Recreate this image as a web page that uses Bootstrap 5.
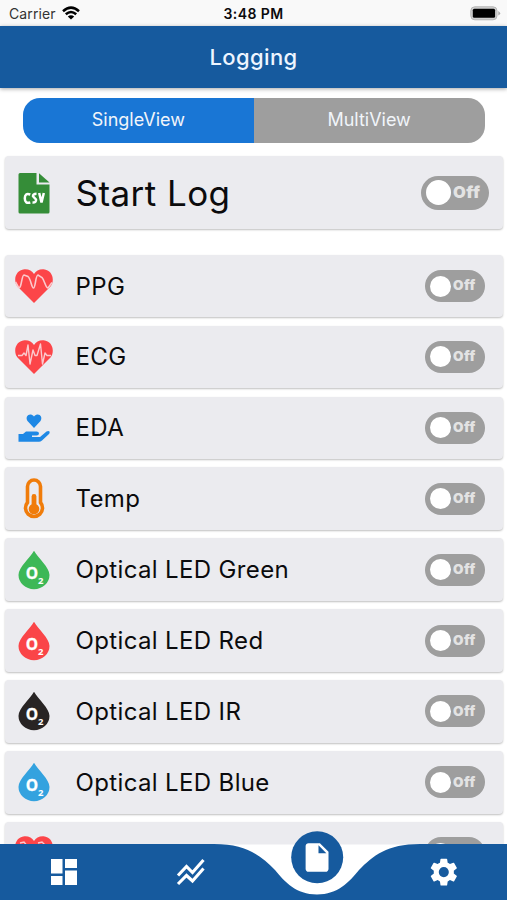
<!DOCTYPE html>
<html lang="en">
<head>
<meta charset="utf-8">
<meta name="viewport" content="width=device-width, initial-scale=1">
<title>Logging</title>
<link href="https://cdn.jsdelivr.net/npm/bootstrap@5.3.0/dist/css/bootstrap.min.css" rel="stylesheet">
<style>
body{font-family:Inter,"Liberation Sans",sans-serif;color:#0b0b0d;background:#fff;line-height:1}
.screen{height:900px}
.status-bar{height:25.5px;background:#f9f9f9;font-size:14px;padding:2px 9px 0 9px;display:grid;grid-template-columns:1fr auto 1fr}
.carrier{color:#333;letter-spacing:.1px}
.wifi{margin:-2px 0 0 6px}
.battery{margin:-1px -3px 0 0}
.clock{font-weight:600;font-size:14px;letter-spacing:.4px}
.title-bar{height:62.5px;background:#165a9e;color:#eef5ff;font-size:22px;font-weight:500;letter-spacing:.4px;box-shadow:0 1px 4px rgba(0,0,0,.35)}
.tabs{margin:9.5px 22.5px 0 23px;height:45px;border-radius:17px;font-size:18px;color:#f1f5fa}
.tab-on{background:#1976d5}
.tab-off{background:#9e9e9e}
.log-card{margin:0 4px 8.3px 5px;height:62.6px;background:#ebebef;border-radius:4px;box-shadow:0 1px 2px rgba(0,0,0,.25);font-size:24px;letter-spacing:.36px;padding-right:18px}
.log-card.big{height:73px;margin-top:13.5px;margin-bottom:25.8px;font-size:35px;letter-spacing:.45px;padding-right:14px}
.pic{width:70.5px;padding-left:8.5px}
.pic svg{display:block}
.big .pic{padding-top:1px}
.label{padding-top:1px}
.last-label{padding-top:2px}
.toggle{width:60px;height:32px;border-radius:16px;background:#9e9e9e;color:#e3e3e3;font-size:13.5px;font-weight:900;letter-spacing:.5px;padding-left:4.5px}
.knob{width:21px;height:21px;border-radius:50%;background:#fff;margin-right:2.5px}
.big .toggle{width:68px;height:34px;border-radius:17px;font-size:16.5px;padding-left:4.5px}
.big .knob{width:25px;height:25px;margin-right:2.5px}
.dock{height:56px;left:0;right:0;bottom:0}
.dock svg{display:block;overflow:visible}
</style>
<script src="https://cdn.jsdelivr.net/npm/bootstrap@5.3.0/dist/js/bootstrap.bundle.min.js"></script>
</head>
<body>
<svg width="0" height="0" class="position-absolute">
<defs>
<path id="heart" d="M20 37 L3.5 20.5 C-1 15 1 4 10.5 3.2 C15 3 18 5 20 8 C22 5 25 3 29.500 3.200 C39 4 41 15 36.500 20.500Z" fill="#fc4549"/>
<g id="drop"><path d="M20 .7 C24 8 35.500 17 35.500 25 A15.500 14.200 0 0 1 4.500 25 C4.500 17 16 8 20 .7Z"/><g fill="#fff" font-family="Open Sans,sans-serif" font-weight="700"><text x="11.800" y="29" font-size="15.500" stroke="#fff" stroke-width=".3">O</text><text x="24" y="34" font-size="9.500">2</text></g></g>
</defs>
</svg>
<div class="screen position-relative overflow-hidden d-flex flex-column">
<div class="status-bar align-items-center flex-shrink-0">
<div class="d-flex align-items-center"><span class="carrier">Carrier</span><svg class="wifi" width="18" height="14" viewBox="0 0 18 14"><g fill="none" stroke="#000" stroke-width="2.500"><path d="M1 5.200Q9-2 17 5.200M3.800 8.300Q9 3.700 14.200 8.300"/></g><path d="M5.800 10.500Q9 8 12.200 10.500L9 13.500Z"/></svg></div>
<div class="clock">3:48 PM</div>
<div class="d-flex justify-content-end"><svg class="battery" width="31" height="15" viewBox="0 0 31 15"><rect x=".8" y=".8" width="26.200" height="13" rx="4" fill="#d0d0d0" stroke="#b5b5b5"/><rect x="2.800" y="2.800" width="22.300" height="9" rx="1.500"/><path d="M28.300 5Q32 7.300 28.300 9.600Z" fill="#aaa"/></svg></div>
</div>
<div class="title-bar d-flex align-items-center justify-content-center flex-shrink-0">Logging</div>
<div class="tabs d-flex overflow-hidden flex-shrink-0">
<div class="tab-on w-50 d-flex align-items-center justify-content-center">SingleView</div>
<div class="tab-off w-50 d-flex align-items-center justify-content-center">MultiView</div>
</div>
<div class="log-card big d-flex align-items-center flex-shrink-0">
<div class="pic"><svg width="40" height="42" viewBox="0 0 40 42"><path d="M6 1H22.500V12.500H35.500V40Q35.500 41.500 34 41.500H6Q4.500 41.500 4.500 40V2.500Q4.500 1 6 1Z" fill="#358d38"/><path d="M25 1.200L35.500 10.500H25Z" fill="#358d38"/><path d="M16.300 22.500Q10.800 20.500 10.800 26.300T16.300 30.500M22.500 21.800Q18.700 21.800 19 24.300L22 27.500Q22.500 30.800 18.500 30.600M25.200 21L27.500 30.500L29.800 21" fill="none" stroke="#fff" stroke-width="2.500"/></svg></div>
<div class="label flex-grow-1">Start Log</div>
<div class="toggle d-flex align-items-center"><span class="knob"></span>Off</div>
</div>
<div class="log-card d-flex align-items-center flex-shrink-0"><div class="pic"><svg width="40" height="40"><use href="#heart"/><path d="M1.500 16L4.500 21.500C7.500 24 7.500 9 10 9L14 10.500C17 13 17.500 22 19.500 22S21.500 9 24 9L28 11.500C31 15 31.500 22 34 22L38 16.500" fill="none" stroke="#fbc9cd" stroke-width="1.600"/></svg></div><div class="label flex-grow-1">PPG</div><div class="toggle d-flex align-items-center"><span class="knob"></span>Off</div></div>
<div class="log-card d-flex align-items-center flex-shrink-0"><div class="pic"><svg width="40" height="40"><use href="#heart"/><path d="M4 18.500H8L10 16L12 18.500L14 8L16 27L19 13L21 18.500H23L26.500 7L28.500 27L31 16L33 18.500H37" fill="none" stroke="#fbc9cd" stroke-width="1.400" stroke-linejoin="round"/></svg></div><div class="label flex-grow-1">ECG</div><div class="toggle d-flex align-items-center"><span class="knob"></span>Off</div></div>
<div class="log-card d-flex align-items-center flex-shrink-0"><div class="pic"><svg width="40" height="40" fill="#1e88e5"><path d="M20 20L13.500 13C10.500 8 16 4 20 8.500C24 4 29.500 8 26.500 13Z"/><path d="M4.500 26H9L12 23.500H22.500Q25 23.500 25 25.500T22.500 27.500H18V29H26L32.500 23.500Q34.500 22.500 35.500 23.500Q36 25 35 26L28 32.500Q26.500 33.800 25 33.800H4.500Z"/></svg></div><div class="label flex-grow-1">EDA</div><div class="toggle d-flex align-items-center"><span class="knob"></span>Off</div></div>
<div class="log-card d-flex align-items-center flex-shrink-0"><div class="pic"><svg width="40" height="42"><path d="M13.500 24.500V8.500a6.500 6.500 0 0 1 13 0V24.500a8.500 8.500 0 1 1-13 0Z" fill="none" stroke="#f07c0a" stroke-width="3.600"/><path d="M20 18.500V31" stroke="#f07c0a" stroke-width="4.800" stroke-linecap="round"/><circle cx="20" cy="31" r="5.300" fill="#f07c0a"/></svg></div><div class="label flex-grow-1">Temp</div><div class="toggle d-flex align-items-center"><span class="knob"></span>Off</div></div>
<div class="log-card d-flex align-items-center flex-shrink-0"><div class="pic"><svg width="40" height="40" fill="#3db857"><use href="#drop"/></svg></div><div class="label flex-grow-1">Optical LED Green</div><div class="toggle d-flex align-items-center"><span class="knob"></span>Off</div></div>
<div class="log-card d-flex align-items-center flex-shrink-0"><div class="pic"><svg width="40" height="40" fill="#fa4548"><use href="#drop"/></svg></div><div class="label flex-grow-1">Optical LED Red</div><div class="toggle d-flex align-items-center"><span class="knob"></span>Off</div></div>
<div class="log-card d-flex align-items-center flex-shrink-0"><div class="pic"><svg width="40" height="40" fill="#282424"><use href="#drop"/></svg></div><div class="label flex-grow-1">Optical LED IR</div><div class="toggle d-flex align-items-center"><span class="knob"></span>Off</div></div>
<div class="log-card d-flex align-items-center flex-shrink-0"><div class="pic"><svg width="40" height="40" fill="#33a2df"><use href="#drop"/></svg></div><div class="label flex-grow-1">Optical LED Blue</div><div class="toggle d-flex align-items-center"><span class="knob"></span>Off</div></div>
<div class="log-card d-flex align-items-center flex-shrink-0"><div class="pic"><svg width="40" height="40"><use href="#heart"/><path d="M6 10L10 9L14 14M24 10L28 9L33 14" fill="none" stroke="#fbc9cd" stroke-width="1.400"/></svg></div><div class="last-label flex-grow-1">Pain</div><div class="toggle d-flex align-items-center"><span class="knob"></span>Off</div></div>
<nav class="dock position-absolute">
<svg width="507" height="56" viewBox="0 0 507 56">
<path d="M0 .5H507V57H0Z" fill="#fff"/>
<path d="M0 0H214C247 0 261 12 275 26C285 38 296 50.500 317 50.500S349 38 359 26C373 12 387 0 420 0H507V57H0Z" fill="#165a9e"/>
<circle cx="317.200" cy="13.300" r="26" fill="#165a9e"/>
<g fill="#fff">
<path d="M51 15H62.500V29.500H51ZM65 15H77V24H65ZM51 32H62.500V41H51ZM65 26.500H77V41H65Z"/>
<path transform="translate(299.900 -3.700) scale(1.430)" d="M6 2c-1.100 0-2 .9-2 2v16c0 1.100.9 2 2 2h12c1.100 0 2-.9 2-2V8l-6-6H6zm7 7V3.500L18.500 9H13z"/>
<path transform="translate(427 11.300) scale(1.400)" d="M19.140 12.940c.04-.3.060-.61.060-.94s-.02-.64-.07-.94l2.030-1.580a.49.490 0 0 0 .12-.61l-1.920-3.320a.49.490 0 0 0-.59-.22l-2.390.96a7 7 0 0 0-1.620-.94l-.36-2.540a.48.480 0 0 0-.48-.41h-3.840a.47.470 0 0 0-.47.410l-.36 2.540c-.59.240-1.130.57-1.620.94l-2.390-.96a.48.480 0 0 0-.59.220L2.740 8.870a.47.470 0 0 0 .12.610l2.030 1.580a6 6 0 0 0 0 1.880l-2.030 1.580a.49.490 0 0 0-.12.610l1.920 3.320c.12.220.37.290.59.220l2.390-.96c.5.380 1.030.7 1.620.94l.36 2.540c.05.240.24.410.48.410h3.840c.24 0 .44-.17.470-.41l.36-2.540a7 7 0 0 0 1.620-.94l2.390.96c.22.080.47 0 .59-.22l1.920-3.320a.47.470 0 0 0-.12-.61l-2.030-1.580zM12 15.600a3.600 3.600 0 1 1 0-7.200 3.600 3.600 0 0 1 0 7.200z"/>
</g>
<path d="M178 31.500L186.500 22.500L192.500 28.500L203.500 16M178 40L186.500 31.500L192.500 37L203.500 24.500" fill="none" stroke="#fff" stroke-width="3.100"/>
</svg>
</nav>
</div>
</body>
</html>
